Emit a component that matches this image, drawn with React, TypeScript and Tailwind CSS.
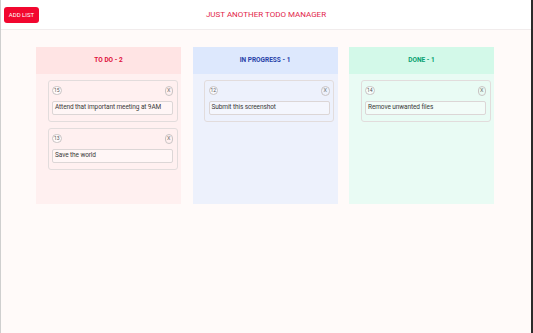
import React from "react";

type Task = { id: number; text: string };
type Column = {
  title: string;
  tasks: Task[];
  head: string;
  body: string;
  titleColor: string;
};

const columns: Column[] = [
  {
    title: "TO DO",
    tasks: [
      { id: 15, text: "Attend that important meeting at 9AM" },
      { id: 13, text: "Save the world" },
    ],
    head: "bg-[#ffe4e4]",
    body: "bg-[#fff0f0]",
    titleColor: "text-[#e0113b]",
  },
  {
    title: "IN PROGRESS",
    tasks: [{ id: 12, text: "Submit this screenshot" }],
    head: "bg-[#dde8fd]",
    body: "bg-[#edf1fc]",
    titleColor: "text-[#2741a8]",
  },
  {
    title: "DONE",
    tasks: [{ id: 14, text: "Remove unwanted files" }],
    head: "bg-[#d3f9e9]",
    body: "bg-[#e9fbf4]",
    titleColor: "text-[#07a070]",
  },
];

function TaskCard({ task }: { task: Task }) {
  return (
    <div className="rounded-[3px] border border-[#e2dcdc] px-[3.5px] pt-[4.5px] pb-[6.5px]">
      <div className="flex items-center justify-between">
        <div className="flex h-[9.5px] w-[9.5px] items-center justify-center rounded-full border border-[#c9c4c4] bg-white/60 text-[5px] text-[#555]">
          {task.id}
        </div>
        <div className="flex h-[10px] w-[8.5px] items-center justify-center rounded-full border border-[#c9c4c4] text-[5.5px] text-[#777]">
          X
        </div>
      </div>
      <div className="mt-[5px] flex h-[14px] items-center rounded-[2px] border border-[#dcd6d6] bg-white/40 px-[2px] text-[6.5px] tracking-[-0.1px] text-[#3a3a3a]">
        {task.text}
      </div>
    </div>
  );
}

function Board({ col }: { col: Column }) {
  return (
    <div className={`flex h-[157px] w-[145px] flex-col ${col.body}`}>
      <div
        className={`flex h-[27px] items-center justify-center pt-[1px] text-[6.5px] font-bold ${col.head} ${col.titleColor}`}
      >
        {col.title} - {col.tasks.length}
      </div>
      <div className="flex flex-col gap-[6px] pt-[6px] pl-[11.5px] pr-[3.5px]">
        {col.tasks.map((t) => (
          <TaskCard key={t.id} task={t} />
        ))}
      </div>
    </div>
  );
}

export default function App() {
  return (
    <div
      className="flex h-screen w-full flex-col border-l border-l-[#cfcfcf] border-r-2 border-r-[#2b2b2b] bg-[#fffaf9]"
      style={{ fontFamily: "Roboto, 'Liberation Sans', sans-serif" }}
    >
      <div className="flex h-[30px] items-center border-b border-[#f1ecec] bg-white px-[3px]">
        <button className="h-[16px] w-[35px] rounded-[3px] bg-[#f2072f] text-[6px] text-white">
          ADD LIST
        </button>
        <div className="flex-1 text-center text-[8px] text-[#e2264a]">
          JUST ANOTHER TODO MANAGER
        </div>
        <div className="w-[35px]" />
      </div>
      <div className="flex gap-[11.5px] pt-[17px] pl-[35px]">
        {columns.map((c) => (
          <Board key={c.title} col={c} />
        ))}
      </div>
    </div>
  );
}
